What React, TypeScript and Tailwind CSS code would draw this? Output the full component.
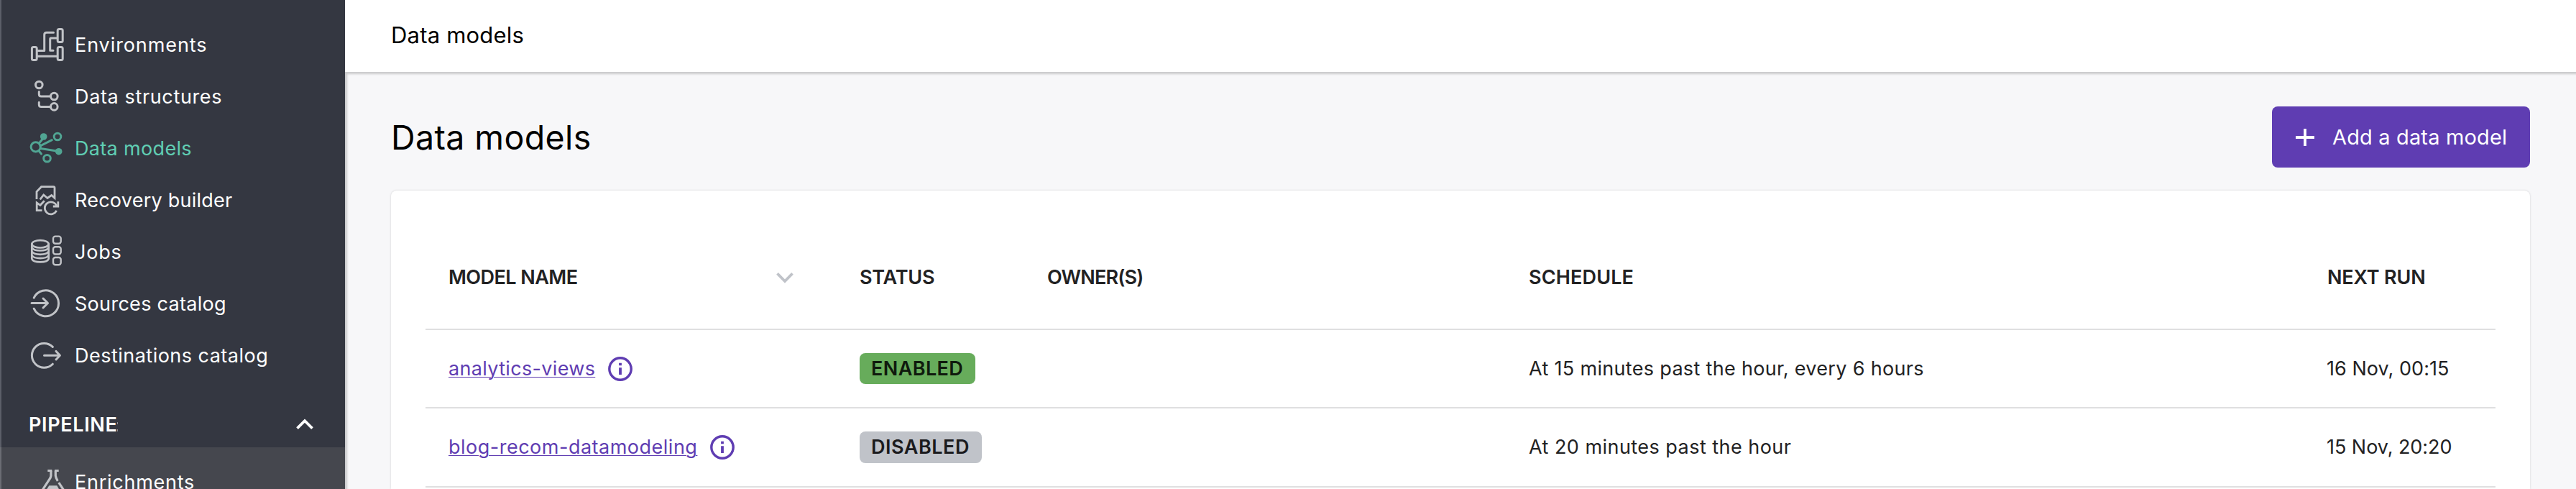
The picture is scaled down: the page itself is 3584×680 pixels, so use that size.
import React from 'react';

type IconProps = { children: React.ReactNode; className?: string };

function Icon({ children, className = 'text-[#c1c3c7]' }: IconProps) {
  return (
    <svg
      viewBox="0 0 48 48"
      className={`h-12 w-12 shrink-0 overflow-visible ${className}`}
      fill="none"
      stroke="currentColor"
      strokeWidth="3"
      strokeLinecap="round"
      strokeLinejoin="round"
    >
      {children}
    </svg>
  );
}

const EnvironmentsIcon = () => (
  <Icon>
    <rect x="2.4" y="27.4" width="6.8" height="18.2" rx="2" />
    <rect x="38.2" y="27.4" width="7" height="18.2" rx="2" />
    <rect x="38.2" y="2.4" width="7" height="18.2" rx="2" />
    <path d="M10 40.3H37M10 32.5H19.7V10.3Q19.7 7.3 22.7 7.3H32.5M37 15H29Q27.7 15 27.7 16.5V32.3H32" />
  </Icon>
);

const StructuresIcon = () => (
  <Icon>
    <circle cx="12.3" cy="8" r="4.8" />
    <circle cx="33.3" cy="24" r="4.8" />
    <circle cx="33.3" cy="38.4" r="4.8" />
    <path d="M12.3 17.5V21Q12.3 24 15.3 24H28M12.3 32.3V35.4Q12.3 38.4 15.3 38.4H28" />
  </Icon>
);

const ModelsIcon = () => (
  <Icon className="text-[#51a593]">
    <circle cx="7.7" cy="22.3" r="6.6" />
    <circle cx="38" cy="8" r="4.8" />
    <circle cx="23.5" cy="38.3" r="4.8" />
    <circle cx="18.7" cy="8" r="4.8" fill="currentColor" stroke="none" />
    <circle cx="39.7" cy="28.7" r="4.8" fill="currentColor" stroke="none" />
    <path d="M12.3 17.3L17 11.5M14 20.8L30.3 12.7M14.5 24.5L37 27.9M11.8 27.5L15.5 32" />
  </Icon>
);

const RecoveryIcon = () => (
  <Icon>
    <g strokeWidth="2.8" strokeLinejoin="miter" strokeLinecap="butt">
      <path d="M9 23V12.5L15.5 5.7H32.5Q34 5.7 34 7.2V21.3L29.7 17.5L24 21.5L18.7 17L13.7 23.3" />
      <path d="M16.5 38.7H9.2V28L14 31.3L19.7 25.2" />
      <path d="M36.8 32.5A8.5 8.5 0 1 0 36.6 38.8" />
      <path d="M38.8 26.2V33H31.8" />
    </g>
  </Icon>
);

const JobsIcon = () => (
  <Icon>
    <g strokeWidth="2.7">
      <ellipse cx="14" cy="13.3" rx="11.7" ry="5.2" />
      <path d="M2.3 13.3V34Q4 38.4 14 38.4T25.7 34V13.3" />
      <path d="M2.8 19Q5 22.5 14 22.5T25.2 19M2.8 24.3Q5 27.8 14 27.8T25.2 24.3M2.8 29.6Q5 33.1 14 33.1T25.2 29.6" />
    </g>
    <g strokeWidth="2.4">
      <rect x="32" y="2.6" width="10.7" height="10.2" rx="3" />
      <rect x="32" y="17.3" width="10.7" height="10.2" rx="3" />
      <rect x="32" y="32" width="10.7" height="10.2" rx="3" />
    </g>
  </Icon>
);

const SourcesIcon = () => (
  <Icon>
    <path d="M5.2 16.2A18 18 0 1 1 5.2 31.2" />
    <path d="M2 23.5H24.5M18 17L24.5 23.5L18 30" />
  </Icon>
);

const DestinationsIcon = () => (
  <Icon>
    <path d="M31.3 12.4A16.9 16.9 0 1 0 31.3 36.2" />
    <path d="M19.5 24.2H41M36 18.4L41.4 24.2L36 30" />
  </Icon>
);

const FlaskIcon = () => (
  <Icon>
    <g strokeWidth="3.2" strokeLinecap="butt">
      <path d="M24.3 8.5H30.3M34 8.5H39.7" />
      <path d="M28.9 8.5V15.5Q28.6 18 27 20.2L16 37" />
      <path d="M35.3 8.5V15.5Q35.6 18.5 38.3 22.8M39.8 25.2L47 36" />
    </g>
    <path d="M26.3 29.3H37.3L41 36H22Z" fill="currentColor" stroke="none" />
  </Icon>
);

const nav = [
  { label: 'Environments', icon: EnvironmentsIcon, cls: 'text-white tracking-[0.91px]' },
  { label: 'Data structures', icon: StructuresIcon, cls: 'text-white tracking-[0.64px]' },
  { label: 'Data models', icon: ModelsIcon, cls: 'text-[#60ceb3] tracking-[0.33px]' },
  { label: 'Recovery builder', icon: RecoveryIcon, cls: 'text-white tracking-[0.24px]' },
  { label: 'Jobs', icon: JobsIcon, cls: 'text-white tracking-[0.8px]' },
  { label: 'Sources catalog', icon: SourcesIcon, cls: 'text-white tracking-[0.3px]' },
  { label: 'Destinations catalog', icon: DestinationsIcon, cls: 'text-white tracking-[0.48px]' },
];

type NavItemProps = { label: string; icon: React.ComponentType; cls: string };

function NavItem({ label, icon: Glyph, cls }: NavItemProps) {
  return (
    <a className="flex h-[72px] items-center gap-[14px] pl-10">
      <Glyph />
      <span className={`pt-0.5 ${cls}`}>{label}</span>
    </a>
  );
}

function Sidebar() {
  return (
    <aside className="flex w-[480px] shrink-0 flex-col border-l-2 border-[#5b5e68] bg-[#343741] pt-[26px]">
      <nav>
        {nav.map((item) => (
          <NavItem key={item.label} {...item} />
        ))}
      </nav>
      <div className="mt-7 flex h-16 shrink-0 items-center justify-between pr-11 pl-[38px] font-semibold text-white">
        <span className="flex items-center pt-0.5">
          <span className="tracking-[0.65px]">PIPELINE</span>
          <span className="mt-1 flex flex-col gap-[7px]">
            <span className="h-[3px] w-px bg-[#8b8d94]" />
            <span className="h-[3px] w-px bg-[#8b8d94]" />
          </span>
        </span>
        <svg viewBox="0 0 24 16" className="h-4 w-6" fill="none" stroke="currentColor" strokeWidth="3.8">
          <path d="M1.5 13.6L12 3.2L22.5 13.6" />
        </svg>
      </div>
      <div className="-ml-0.5 grow border-l-2 border-[#6a6c73] bg-[#45474e] pt-3">
        <NavItem label="Enrichments" icon={FlaskIcon} cls="text-white tracking-[0.75px]" />
      </div>
    </aside>
  );
}

function InfoIcon() {
  return (
    <svg viewBox="0 0 34 34" className="h-[34px] w-[34px] shrink-0" fill="none" stroke="#5f3db2" strokeWidth="3.4">
      <circle cx="17" cy="17" r="15.2" />
      <path d="M17 15.2V25M17 8.8V12.2" strokeWidth="3.8" />
    </svg>
  );
}

const grid = 'grid grid-cols-[572px_260px_671px_1110px_1fr] items-center border-b-2 border-[#dfdfe0] pl-8';

const rows = [
  {
    name: 'analytics-views',
    nameCls: 'tracking-[0.33px]',
    status: 'ENABLED',
    badgeCls: 'h-[43px] w-[161px] bg-[#67ac5b] text-[#0f1a0d] tracking-[0.4px]',
    schedule: 'At 15 minutes past the hour, every 6 hours',
    scheduleCls: 'tracking-[0.32px]',
    next: '16 Nov, 00:15',
    nextCls: 'tracking-[0.04px]',
    rowCls: 'h-[109px]',
  },
  {
    name: 'blog-recom-datamodeling',
    nameCls: 'tracking-[0.5px]',
    status: 'DISABLED',
    badgeCls: 'h-11 w-[170px] bg-[#c0c3c9] text-[#1b1b1d] tracking-[0.52px]',
    schedule: 'At 20 minutes past the hour',
    scheduleCls: 'tracking-[0.46px]',
    next: '15 Nov, 20:20',
    nextCls: 'tracking-[-0.05px]',
    rowCls: 'h-[110px]',
  },
];

export default function App() {
  return (
    <div className="flex h-[680px] w-[3584px] overflow-hidden bg-white font-['Inter','Liberation_Sans',sans-serif] text-[27px] leading-9 whitespace-nowrap text-[#222223]">
      <Sidebar />
      <main className="flex min-w-0 flex-1 flex-col">
        <header className="flex h-[100px] shrink-0 items-center bg-white pb-0.5 pl-16 text-[31px] tracking-[0.19px] text-black">
          Data models
        </header>
        <section className="flex flex-1 flex-col bg-[#f7f7f9] px-16 pt-12 shadow-[inset_3px_3px_3px_0_rgba(0,0,0,0.18)]">
          <div className="flex h-[85px] shrink-0 items-center justify-between">
            <h1 className="text-[46.5px] leading-[56px] tracking-[0.4px] text-black">Data models</h1>
            <button className="flex h-[85px] w-[359px] items-center gap-[25px] rounded-lg bg-[#5f3db2] pl-[33px] text-[29px] tracking-[0.15px] text-white">
              <svg viewBox="0 0 26 26" className="h-[26px] w-[26px]" stroke="currentColor" strokeWidth="3.8">
                <path d="M13 1V25M0 13H26" />
              </svg>
              Add a data model
            </button>
          </div>
          <div className="mt-8 grow rounded-t-lg bg-white px-12 pt-12 shadow-[0_0_3px_rgba(0,0,0,0.16)]">
            <div className={`${grid} h-[146px] pt-0.5 font-semibold`}>
              <div className="flex items-center justify-between pr-[92px]">
                <span className="tracking-[-0.55px]">MODEL NAME</span>
                <svg viewBox="0 0 24 16" className="h-4 w-6" fill="none" stroke="#c0c3c9" strokeWidth="3.8">
                  <path d="M1.5 2.4L12 13L22.5 2.4" />
                </svg>
              </div>
              <span className="tracking-[-0.2px]">STATUS</span>
              <span className="pl-px tracking-[-0.8px]">OWNER(S)</span>
              <span className="tracking-[0.15px]">SCHEDULE</span>
              <span className="pl-px tracking-[-0.15px]">NEXT RUN</span>
            </div>
            {rows.map((r) => (
              <div key={r.name} className={`${grid} ${r.rowCls}`}>
                <div className="flex items-center gap-[18px]">
                  <a className={`text-[#5f3db2] underline decoration-1 underline-offset-2 ${r.nameCls}`}>{r.name}</a>
                  <InfoIcon />
                </div>
                <span className={`flex items-center rounded-lg pl-4 font-semibold ${r.badgeCls}`}>{r.status}</span>
                <span />
                <span className={r.scheduleCls}>{r.schedule}</span>
                <span className={r.nextCls}>{r.next}</span>
              </div>
            ))}
          </div>
        </section>
      </main>
    </div>
  );
}
